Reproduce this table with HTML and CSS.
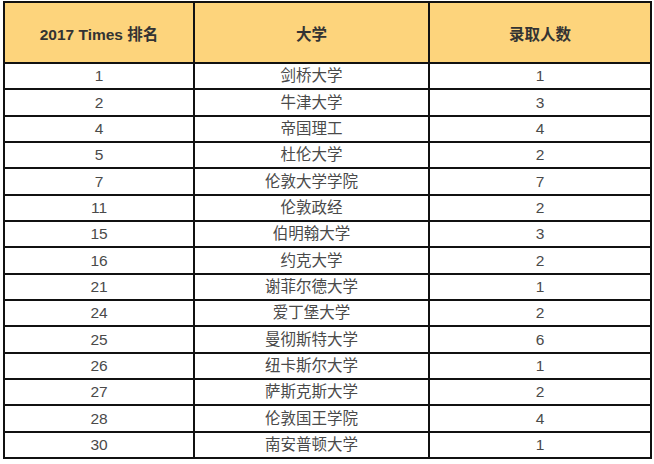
FILE: index.html
```
<!DOCTYPE html>
<html lang="zh-CN">
<head>
<meta charset="utf-8">
<title>2017 Times 排名</title>
<link rel="stylesheet" href="styles.css">
</head>
<body>
<table class="rank-table">
  <colgroup>
    <col class="c-rank">
    <col class="c-uni">
    <col class="c-num">
  </colgroup>
  <thead>
    <tr><th>2017 Times 排名</th><th>大学</th><th>录取人数</th></tr>
  </thead>
  <tbody>
    <tr><td>1</td><td>剑桥大学</td><td>1</td></tr>
    <tr><td>2</td><td>牛津大学</td><td>3</td></tr>
    <tr><td>4</td><td>帝国理工</td><td>4</td></tr>
    <tr><td>5</td><td>杜伦大学</td><td>2</td></tr>
    <tr><td>7</td><td>伦敦大学学院</td><td>7</td></tr>
    <tr><td>11</td><td>伦敦政经</td><td>2</td></tr>
    <tr><td>15</td><td>伯明翰大学</td><td>3</td></tr>
    <tr><td>16</td><td>约克大学</td><td>2</td></tr>
    <tr><td>21</td><td>谢菲尔德大学</td><td>1</td></tr>
    <tr><td>24</td><td>爱丁堡大学</td><td>2</td></tr>
    <tr><td>25</td><td>曼彻斯特大学</td><td>6</td></tr>
    <tr><td>26</td><td>纽卡斯尔大学</td><td>1</td></tr>
    <tr><td>27</td><td>萨斯克斯大学</td><td>2</td></tr>
    <tr><td>28</td><td>伦敦国王学院</td><td>4</td></tr>
    <tr><td>30</td><td>南安普顿大学</td><td>1</td></tr>
  </tbody>
</table>
</body>
</html>
```
FILE: styles.css
```
html, body {
  margin: 0;
  padding: 0;
  background: #ffffff;
}
body {
  padding: 1px 0 0 3px;
  font-family: "Liberation Sans", "Noto Sans CJK SC", sans-serif;
}
.rank-table {
  border-collapse: collapse;
  table-layout: fixed;
  width: 647px;
}
.c-rank { width: 190px; }
.c-uni { width: 235px; }
.c-num { width: 222px; }
.rank-table th,
.rank-table td {
  border: 2px solid #111111;
  text-align: center;
  padding: 0;
}
.rank-table th {
  background: #fdd47c;
  color: #333333;
  font-weight: bold;
  font-size: 15.5px;
  height: 59px;
}
.rank-table td {
  color: #4a4a4a;
  font-size: 15.5px;
  height: 24.35px;
  line-height: 18px;
}
```
